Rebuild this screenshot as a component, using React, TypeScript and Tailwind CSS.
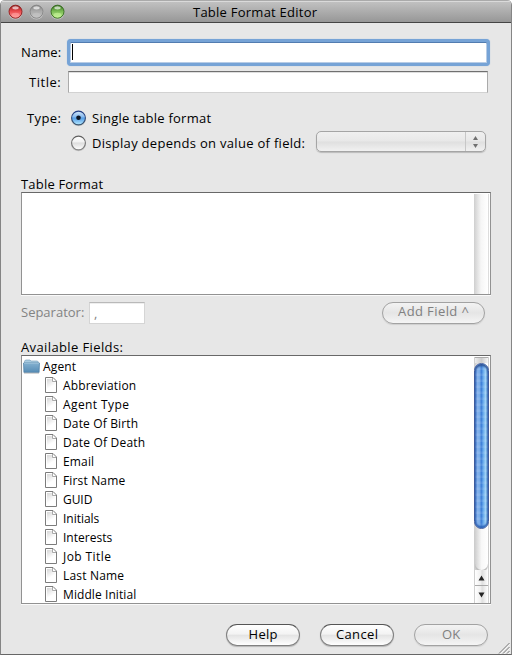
import React from "react";

const fields: [string, string][] = [
  ["Abbreviation", "w-[73px]"],
  ["Agent Type", "w-[66px]"],
  ["Date Of Birth", "w-[75px]"],
  ["Date Of Death", "w-[82px]"],
  ["Email", "w-[31px]"],
  ["First Name", "w-[62px]"],
  ["GUID", "w-[29px]"],
  ["Initials", "w-[36px]"],
  ["Interests", "w-[49px]"],
  ["Job Title", "w-[48px]"],
  ["Last Name", "w-[61px]"],
  ["Middle Initial", "w-[73px]"],
];

/* Spreads a label over a fixed advance width by adjusting its letter spacing. */
function Label({ text, width, className = "" }: { text: string; width: string; className?: string }) {
  const ref = React.useRef<HTMLSpanElement>(null);
  const [gap, setGap] = React.useState(0);
  React.useLayoutEffect(() => {
    const box = ref.current;
    if (!box) return;
    const inner = box.firstElementChild as HTMLElement;
    const natural = inner.getBoundingClientRect().width;
    setGap((box.getBoundingClientRect().width + 0.3 - natural) / text.length);
  }, [text]);
  return (
    <span ref={ref} className={`inline-block shrink-0 whitespace-nowrap ${width} ${className}`}>
      <span style={{ letterSpacing: `${gap}px` }}>{text}</span>
    </span>
  );
}

function Light({ id, dark, mid, light }: { id: string; dark: string; mid: string; light: string }) {
  return (
    <svg width="15" height="16" viewBox="0 0 15 16">
      <defs>
        <linearGradient id={id} x1="0" y1="0" x2="0" y2="1">
          <stop offset="0" stopColor={dark} />
          <stop offset=".45" stopColor={mid} />
          <stop offset="1" stopColor={light} />
        </linearGradient>
      </defs>
      <circle cx="7.5" cy="8.6" r="7" fill="#d8d8d8" opacity=".7" />
      <circle cx="7.5" cy="7.7" r="6.5" fill={`url(#${id})`} stroke={dark} strokeWidth="1" />
      <ellipse cx="7.5" cy="3.8" rx="3.2" ry="1.6" fill="#fff" opacity=".65" />
      <ellipse cx="7.5" cy="11" rx="3.8" ry="2.3" fill={light} opacity=".65" />
    </svg>
  );
}

function Radio({ on = false }: { on?: boolean }) {
  const id = on ? "radioOn" : "radioOff";
  return (
    <svg width="16" height="17" viewBox="0 0 16 17" className="shrink-0">
      <defs>
        <linearGradient id={id} x1="0" y1="0" x2="0" y2="1">
          <stop offset="0" stopColor={on ? "#d5e8fa" : "#fff"} />
          <stop offset=".42" stopColor={on ? "#86b9ee" : "#f2f2f2"} />
          <stop offset=".5" stopColor={on ? "#559de6" : "#dddddd"} />
          <stop offset="1" stopColor={on ? "#b6eaff" : "#fff"} />
        </linearGradient>
        <linearGradient id={id + "Edge"} x1="0" y1="0" x2="0" y2="1">
          <stop offset="0" stopColor={on ? "#203d86" : "#5e5e5e"} />
          <stop offset="1" stopColor={on ? "#3a536c" : "#858585"} />
        </linearGradient>
      </defs>
      <circle cx="8.5" cy="9" r="7.3" fill="#999" opacity=".35" />
      <circle cx="8.5" cy="8" r="6.9" fill={`url(#${id})`} stroke={`url(#${id}Edge)`} strokeWidth="1.1" />
      {on && <circle cx="8.5" cy="7.8" r="2.3" fill="#0c1422" />}
    </svg>
  );
}

function Folder() {
  return (
    <svg width="17" height="15" viewBox="0 0 17 15" className="shrink-0">
      <defs>
        <linearGradient id="folder" x1="0" y1="0" x2="0" y2="1">
          <stop offset="0" stopColor="#83b0d0" />
          <stop offset="1" stopColor="#568cb5" />
        </linearGradient>
      </defs>
      <path d="M1.5 5V2.2L2.5 1H7l1 1h6.5l.8 1v2z" fill="#a9cbe0" stroke="#7fa3bd" strokeWidth=".7" />
      <path d="M.5 4h16l-.4 9.4H.9z" fill="url(#folder)" stroke="#4c7ea5" strokeWidth=".7" />
      <path d="M1 4.5h15" stroke="#a5c9e0" strokeWidth=".7" />
      <path d="M1 14.2h15" stroke="#aaa" strokeWidth=".7" />
    </svg>
  );
}

function Doc() {
  return (
    <svg width="12" height="16" viewBox="0 0 12 16" className="shrink-0">
      <defs>
        <linearGradient id="doc" x1="0" y1="0" x2=".4" y2="1">
          <stop offset="0" stopColor="#d6d6d6" />
          <stop offset=".75" stopColor="#fff" />
        </linearGradient>
      </defs>
      <path d="M.5.5h7.5l3.5 3.5v11.5H.5z" fill="#fff" stroke="#7c7c7c" />
      <path d="M2 2h5.5v3.5H10V14H2z" fill="url(#doc)" />
      <path d="M7.5 1v3.5h3.5" fill="none" stroke="#a0a0a0" strokeWidth=".9" />
    </svg>
  );
}

function Button({ text, width, box, disabled = false }: { text: string; width: string; box: string; disabled?: boolean }) {
  return (
    <button
      className={`flex h-[22px] ${box} items-center justify-center rounded-full border-[1.5px] pb-[3px] ${
        disabled
          ? "border-[#a2a2a2] bg-linear-to-b from-[#f3f3f3] via-[#e5e5e5] to-[#f5f5f5] text-[#808080] shadow-[0_1px_1px_#cfcfcf]"
          : "border-[#808080] border-t-[#555] bg-[linear-gradient(#fff_0%,#f3f3f3_45%,#e4e4e4_52%,#fff_100%)] text-black shadow-[0_1px_1px_#b5b5b5]"
      }`}
    >
      <Label text={text} width={width} />
    </button>
  );
}

export default function App() {
  return (
    <div className="flex h-[655px] w-[512px] flex-col overflow-hidden rounded-t-[5px] border-x border-b border-[#858585] border-b-[#666] bg-[#e7e7e7] font-['Open_Sans','Noto_Sans',sans-serif] text-[13px] leading-[18px] text-black">
      <header className="flex h-[23px] shrink-0 items-center border-b border-[#454545] bg-linear-to-b from-[#c5c5c5] to-[#979797] shadow-[inset_0_1px_0_#aaa,inset_0_2px_0_#dadada]">
        <div className="ml-[7px] mt-[2px] flex gap-[6px]">
          <Light id="red" dark="#8f2020" mid="#e9484b" light="#ff9e9d" />
          <Light id="gray" dark="#858585" mid="#aaaaaa" light="#c5c5c5" />
          <Light id="green" dark="#376d20" mid="#77b952" light="#c5f397" />
        </div>
        <Label text="Table Format Editor" width="w-[124px]" className="ml-[128px] mt-[2px]" />
      </header>

      <main className="flex min-h-0 flex-1 flex-col pl-5">
        <div className="mt-[16px] flex h-[27px] items-center">
          <Label text="Name:" width="w-[40px]" className="-mt-[2px]" />
          <div className="ml-[6px] flex h-[27px] w-[423px] items-center rounded-[4px] border-[3px] border-[#76a3d6] bg-white pl-[2px] shadow-[inset_0_1px_0_#527cb0,inset_0_0_0_1px_#b7cce6,0_0_1px_#8fb4df]">
            <div className="-mt-[2px] h-4 w-px bg-black" />
          </div>
        </div>
        <div className="mt-[5px] flex h-[22px] items-center">
          <Label text="Title:" width="w-[32px]" className="ml-2" />
          <div className="ml-[7px] h-[22px] w-[420px] border border-[#aaa] border-b-[#d2d2d2] border-t-[#707070] bg-white shadow-[inset_0_1px_0_#dedede]" />
        </div>

        <div className="mt-[14px] flex">
          <Label text="Type:" width="w-[34px]" className="ml-[6px] mt-[2px]" />
          <div className="ml-[9px]">
            <div className="flex h-[22px] items-center">
              <Radio on />
              <Label text="Single table format" width="w-[119px]" className="-mt-px ml-[6px]" />
            </div>
            <div className="mt-[2px] flex h-[24px] items-center">
              <Radio />
              <Label text="Display depends on value of field:" width="w-[213px]" className="ml-[6px]" />
              <div className="-mt-[3px] ml-[11px] flex h-[21px] w-[170px] justify-end rounded-[5px] border border-[#a5a5a5] bg-[linear-gradient(#f0f0f0,#e8e8e8_48%,#dfdfdf_52%,#f1f1f1)] shadow-[0_1px_1px_#bbb]">
                <div className="flex w-[20px] items-center justify-center border-l border-[#c7c7c7]">
                  <svg width="5" height="12" viewBox="0 0 5 12" fill="#707070" className="-ml-px">
                    <path d="M0 4L2.5 0 5 4zM0 8h5L2.5 12z" />
                  </svg>
                </div>
              </div>
            </div>
          </div>
        </div>

        <Label text="Table Format" width="w-[82px]" className="mt-[20px]" />
        <div className="-mt-px flex h-[103px] w-[470px] justify-end border border-[#929292] border-t-[#686868] bg-white shadow-[0_1px_0_#fafafa]">
          <div className="mr-[1px] mt-px w-[15px] border-r border-[#ddd] bg-linear-to-r from-[#cfcfcf] via-[#f6f6f6] to-white" />
        </div>

        <div className="mt-[6px] flex h-[23px] items-center text-[#838383]">
          <Label text="Separator:" width="w-[63px]" className="-mt-[2px]" />
          <div className="ml-[5px] h-[22px] w-[56px] border border-[#d5d5d5] border-t-[#b9b9b9] bg-white pl-[4px] leading-[20px] shadow-[inset_0_1px_0_#eee]">,</div>
          <div className="ml-[237px]">
            <Button text="Add Field ^" width="w-[71px]" box="w-[103px]" disabled />
          </div>
        </div>

        <Label text="Available Fields:" width="w-[102px]" className="mt-[14px]" />
        <div className="-mt-px flex h-[249px] w-[470px] shrink-0 border border-[#929292] border-t-[#686868] bg-white shadow-[0_1px_0_#fafafa]">
          <div className="min-w-0 flex-1 overflow-hidden pt-[1px] text-[12px]">
            <div className="flex h-[19px] items-center">
              <span className="ml-px flex"><Folder /></span>
              <Label text="Agent" width="w-[33px]" className="ml-[3px]" />
            </div>
            {fields.map(([name, width]) => (
              <div key={name} className="flex h-[19px] items-center">
                <span className="-mt-px ml-[23px] flex"><Doc /></span>
                <Label text={name} width={width} className="ml-[6px]" />
              </div>
            ))}
          </div>
          <div className="mr-px mt-px flex w-[15px] flex-col border-x border-[#d0d0d0] bg-linear-to-r from-[#cfcfcf] via-[#f8f8f8] to-white">
            <div className="h-[6px] border-t border-[#aaa] bg-linear-to-r from-[#eee] via-[#ccc] to-[#f6f6f6]" />
            <div className="-mx-px h-[166px] shrink-0 rounded-full border border-[#3d5a9c] bg-[repeating-linear-gradient(#ffffff00_0_3px,#ffffff18_4px_6px),linear-gradient(90deg,#3f77c9,#86b2ea_20%,#76abe8_36%,#3b7cd6_48%,#6eb0ef_66%,#a0d2f5_82%,#4a83c8)] shadow-[inset_0_2px_2px_#2e5496,inset_0_-2px_2px_#2d65b9]" />
            <div className="h-[41px] rounded-b-full shadow-[0_2px_1px_#bbb]" />
            <div className="flex h-[16px] items-center justify-center border-b border-[#aaa] bg-[linear-gradient(90deg,#fff,#eee_48%,#ddd_52%,#fff)]">
              <svg width="7" height="6"><path d="M.5 5.5L3.5 .5 6.5 5.5z" fill="#252525" /></svg>
            </div>
            <div className="flex flex-1 items-center justify-center bg-[linear-gradient(90deg,#fff,#eee_48%,#ddd_52%,#fff)]">
              <svg width="7" height="6"><path d="M.5 .5h6L3.5 5.5z" fill="#252525" /></svg>
            </div>
          </div>
        </div>

        <footer className="mt-[20px] flex items-start pl-[205px]">
          <Button text="Help" width="w-[29px]" box="w-[74px]" />
          <div className="ml-5"><Button text="Cancel" width="w-[42px]" box="w-[74px]" /></div>
          <div className="ml-5"><Button text="OK" width="w-[18px]" box="w-[74px]" disabled /></div>
          <svg width="12" height="12" className="ml-[10px] mt-[18px]" stroke="#777" fill="none">
            <path d="M1 11.5L11.5 1M5 11.5L11.5 5M9 11.5l2.5-2.5" />
            <path d="M2 12L12 2M6 12l6-6M10 12l2-2" stroke="#fff" opacity=".6" />
          </svg>
        </footer>
      </main>
    </div>
  );
}
